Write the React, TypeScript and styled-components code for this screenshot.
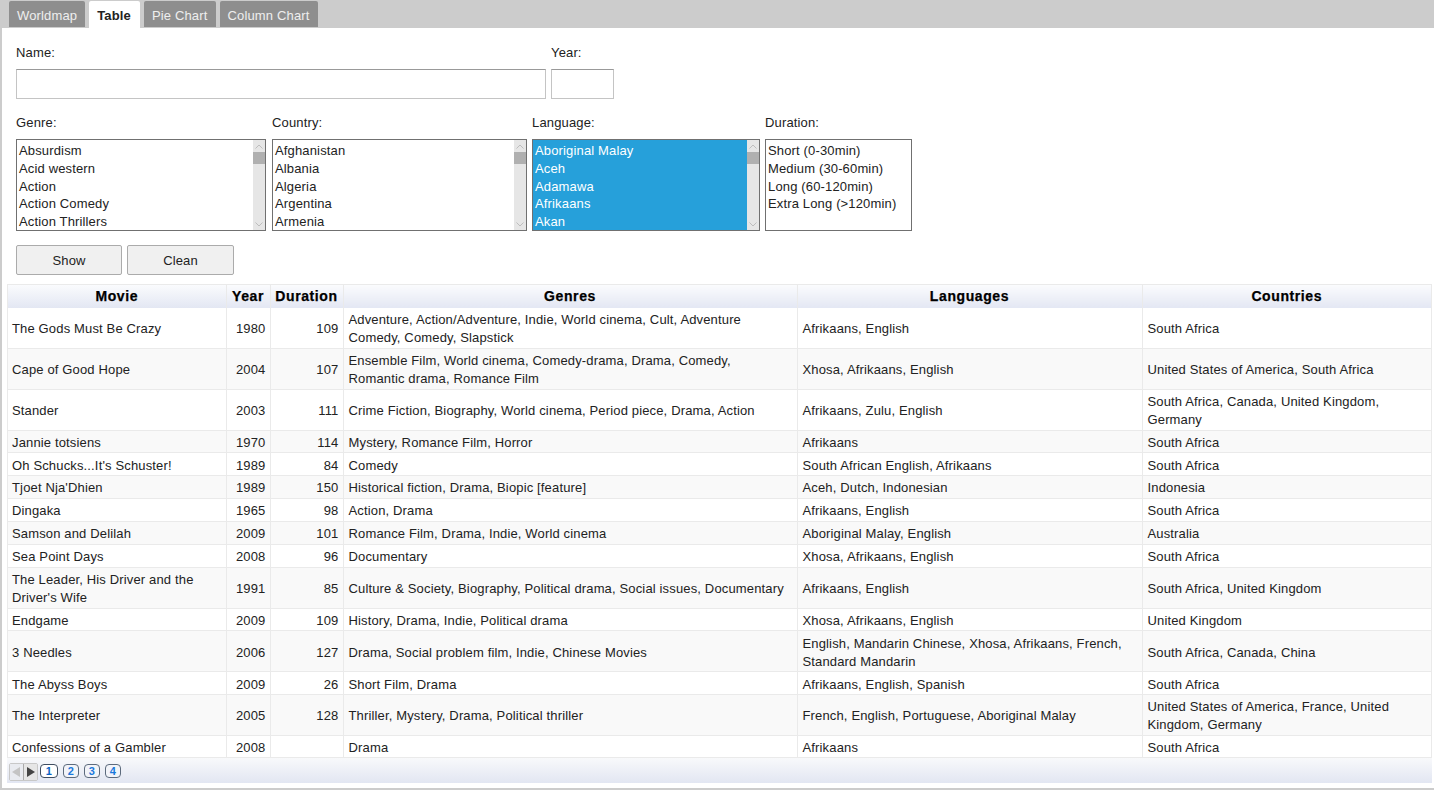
import React from 'react'
import styled, { createGlobalStyle } from 'styled-components'

const GlobalStyle = createGlobalStyle`
  html, body {
    margin: 0;
    padding: 0;
    background: #fff;
    font-family: "Liberation Sans", Arial, sans-serif;
    font-size: 13px;
    color: #222;
  }
`

const tabs = ['Worldmap', 'Table', 'Pie Chart', 'Column Chart']

const genres = ['Absurdism', 'Acid western', 'Action', 'Action Comedy', 'Action Thrillers']
const countries = ['Afghanistan', 'Albania', 'Algeria', 'Argentina', 'Armenia']
const languages = ['Aboriginal Malay', 'Aceh', 'Adamawa', 'Afrikaans', 'Akan']
const durations = ['Short (0-30min)', 'Medium (30-60min)', 'Long (60-120min)', 'Extra Long (>120min)']

const movies = [
  ['The Gods Must Be Crazy', '1980', '109', 'Adventure, Action/Adventure, Indie, World cinema, Cult, Adventure Comedy, Comedy, Slapstick', 'Afrikaans, English', 'South Africa'],
  ['Cape of Good Hope', '2004', '107', 'Ensemble Film, World cinema, Comedy-drama, Drama, Comedy, Romantic drama, Romance Film', 'Xhosa, Afrikaans, English', 'United States of America, South Africa'],
  ['Stander', '2003', '111', 'Crime Fiction, Biography, World cinema, Period piece, Drama, Action', 'Afrikaans, Zulu, English', 'South Africa, Canada, United Kingdom, Germany'],
  ['Jannie totsiens', '1970', '114', 'Mystery, Romance Film, Horror', 'Afrikaans', 'South Africa'],
  ["Oh Schucks...It's Schuster!", '1989', '84', 'Comedy', 'South African English, Afrikaans', 'South Africa'],
  ["Tjoet Nja'Dhien", '1989', '150', 'Historical fiction, Drama, Biopic [feature]', 'Aceh, Dutch, Indonesian', 'Indonesia'],
  ['Dingaka', '1965', '98', 'Action, Drama', 'Afrikaans, English', 'South Africa'],
  ['Samson and Delilah', '2009', '101', 'Romance Film, Drama, Indie, World cinema', 'Aboriginal Malay, English', 'Australia'],
  ['Sea Point Days', '2008', '96', 'Documentary', 'Xhosa, Afrikaans, English', 'South Africa'],
  ["The Leader, His Driver and the Driver's Wife", '1991', '85', 'Culture & Society, Biography, Political drama, Social issues, Documentary', 'Afrikaans, English', 'South Africa, United Kingdom'],
  ['Endgame', '2009', '109', 'History, Drama, Indie, Political drama', 'Xhosa, Afrikaans, English', 'United Kingdom'],
  ['3 Needles', '2006', '127', 'Drama, Social problem film, Indie, Chinese Movies', 'English, Mandarin Chinese, Xhosa, Afrikaans, French, Standard Mandarin', 'South Africa, Canada, China'],
  ['The Abyss Boys', '2009', '26', 'Short Film, Drama', 'Afrikaans, English, Spanish', 'South Africa'],
  ['The Interpreter', '2005', '128', 'Thriller, Mystery, Drama, Political thriller', 'French, English, Portuguese, Aboriginal Malay', 'United States of America, France, United Kingdom, Germany'],
  ['Confessions of a Gambler', '2008', '', 'Drama', 'Afrikaans', 'South Africa'],
]

const Page = styled.div`
  height: 790px;
  box-sizing: border-box;
  border: solid #ccc;
  border-width: 0 0 2px 2px;
  letter-spacing: 0.15px;
  display: flex;
  flex-direction: column;
  overflow: hidden;
`

const TabBar = styled.div`
  height: 28px;
  flex: none;
  background: #ccc;
  margin-left: -2px;
  padding: 1px 0 0 9px;
  box-sizing: border-box;
  display: flex;
  align-items: flex-start;
  gap: 4px;
`

const Tab = styled.div<{ $active?: boolean }>`
  height: ${(p) => (p.$active ? 27 : 26)}px;
  box-sizing: border-box;
  padding: 7px ${(p) => (p.$active ? 9 : 8)}px 0 8px;
  border-radius: 2px 2px 0 0;
  line-height: 15px;
  background: ${(p) => (p.$active ? '#fff' : '#8e8e8e')};
  color: ${(p) => (p.$active ? '#222' : '#eee')};
  font-weight: ${(p) => (p.$active ? 700 : 400)};
`

const Filters = styled.div`
  padding: 0 0 0 14px;
  flex: none;
`

const Row = styled.div`
  display: flex;
  gap: 5px;
`

const Field = styled.div<{ $w: number }>`
  width: ${(p) => p.$w}px;
  flex: none;
`

const Label = styled.div`
  height: 15px;
  line-height: 15px;
  color: #222;
`

const NameLabel = styled(Label)`
  margin: 17px 0 9px;
`

const Input = styled.input`
  display: block;
  box-sizing: border-box;
  width: 100%;
  height: 30px;
  margin: 0;
  border: 1px solid #c4c4c4;
  border-top-color: #999;
  background: #fff;
  outline: none;
`

const SelectRow = styled(Row)`
  margin-top: 16px;
  & > :first-child {
    margin-right: 1px;
  }
`

const SelectLabel = styled(Label)`
  margin-bottom: 9px;
`

const ListBox = styled.div`
  height: 92px;
  box-sizing: border-box;
  border: 1px solid #707070;
  display: flex;
  background: #fff;
`

const Options = styled.div<{ $selected?: boolean }>`
  flex: 1;
  min-width: 0;
  overflow: hidden;
  padding: 2px 0 0 2px;
  line-height: 18px;
  background: ${(p) => (p.$selected ? '#26a0da' : '#fff')};
  color: ${(p) => (p.$selected ? '#fff' : '#222')};
`

const Option = styled.div`
  height: 17.75px;
  white-space: nowrap;
`

const ScrollTrack = styled.div`
  width: 12px;
  flex: none;
  background: #e6e6e6;
  display: flex;
  flex-direction: column;
`

const ScrollButton = styled.div`
  height: 12px;
  flex: none;
  background: #e6e6e6;
  display: flex;
  align-items: center;
  justify-content: center;
`

const ScrollThumb = styled.div`
  height: 12px;
  flex: none;
  background: #b0b0b0;
`

const ScrollRest = styled.div`
  flex: 1;
`

const Chevron = ({ up }: { up?: boolean }) => (
  <svg width="8" height="5" viewBox="0 0 8 5">
    <path d={up ? 'M0.5 4.5L4 1L7.5 4.5' : 'M0.5 0.5L4 4L7.5 0.5'} fill="none" stroke="#bdbdbd" strokeWidth="1" />
  </svg>
)

const Scrollbar = () => (
  <ScrollTrack>
    <ScrollButton><Chevron up /></ScrollButton>
    <ScrollThumb />
    <ScrollRest />
    <ScrollButton><Chevron /></ScrollButton>
  </ScrollTrack>
)

const Buttons = styled.div`
  display: flex;
  gap: 5px;
  margin-top: 14px;
`

const Button = styled.button<{ $w: number }>`
  width: ${(p) => p.$w}px;
  height: 30px;
  box-sizing: border-box;
  margin: 0;
  padding: 0;
  border: 1px solid #ababab;
  border-radius: 2px;
  background: #f0f0f0;
  font: inherit;
  letter-spacing: inherit;
  color: #222;
`

const TableWrap = styled.div`
  margin: 9px 2px 0 5px;
  flex: none;
  border: 1px solid #eaeaea;
  height: 474px;
  overflow: hidden;
  box-sizing: border-box;
`

const Table = styled.table`
  width: 100%;
  table-layout: fixed;
  border-collapse: collapse;
`

const Th = styled.th`
  height: 23px;
  padding: 0;
  font-size: 14px;
  letter-spacing: 0.6px;
  -webkit-text-stroke: 0.25px #000;
  line-height: 15px;
  color: #000;
  text-align: center;
  border-left: 1px solid #eaeaea;
  background: linear-gradient(#fafbfd, #e3e7f3);
  &:first-child {
    border-left: none;
  }
`

const Tr = styled.tr<{ $odd: boolean }>`
  background: ${(p) => (p.$odd ? '#f9f9f9' : '#fff')};
`

const Td = styled.td<{ $num?: boolean }>`
  padding: 3.2px 4px 0.68px 5px;
  line-height: 18px;
  border-left: 1px solid #eaeaea;
  border-bottom: 1px solid #eaeaea;
  text-align: ${(p) => (p.$num ? 'right' : 'left')};
  color: #222;
  vertical-align: middle;
  &:first-child {
    border-left: none;
    padding-left: 4px;
  }
  &:nth-child(4) {
    padding-right: 8px;
  }
`

const Pager = styled.div`
  margin: 0 2px 0 5px;
  height: 25px;
  flex: none;
  box-sizing: border-box;
  padding: 6px 2px 0;
  display: flex;
  background: linear-gradient(#f8f9fb, #e2e6f2);
`

const Arrows = styled.div`
  display: flex;
  height: 18px;
  margin-top: -1px;
  box-sizing: border-box;
  border: 1px solid #c8c8c8;
  border-radius: 2px;
`

const Arrow = styled.div<{ $off?: boolean }>`
  width: 13px;
  display: flex;
  align-items: center;
  justify-content: center;
  background: ${(p) => (p.$off ? '#e9ebf0' : '#e6e6e6')};
  & + & {
    border-left: 1px solid #aaa;
  }
`

const PageButtons = styled.div`
  display: flex;
  gap: 5px;
  margin-left: 2px;
`

const PageButton = styled.div<{ $active?: boolean }>`
  width: ${(p) => (p.$active ? 18 : 16)}px;
  height: 14px;
  line-height: 12px;
  box-sizing: border-box;
  text-align: center;
  font-size: 11px;
  font-weight: 700;
  color: ${(p) => (p.$active ? '#0a62c4' : '#1a78dc')};
  background: ${(p) => (p.$active ? '#fff' : '#f2f4f9')};
  border: 1px solid ${(p) => (p.$active ? '#3f4d60' : '#5c6a7c')};
  border-radius: 4px;
`

const columns = [218, 44, 73, 454, 345, 0]
const headers = ['Movie', 'Year', 'Duration', 'Genres', 'Languages', 'Countries']

const ListField = ({ label, w, items, selected, scroll }: { label: string; w: number; items: string[]; selected?: boolean; scroll?: boolean }) => (
  <Field $w={w}>
    <SelectLabel>{label}</SelectLabel>
    <ListBox>
      <Options $selected={selected}>
        {items.map((item) => <Option key={item}>{item}</Option>)}
      </Options>
      {scroll && <Scrollbar />}
    </ListBox>
  </Field>
)

const App: React.FC = () => (
  <Page>
    <GlobalStyle />
    <TabBar>
      {tabs.map((t) => <Tab key={t} $active={t === 'Table'}>{t}</Tab>)}
    </TabBar>
    <Filters>
      <Row>
        <Field $w={530}>
          <NameLabel>Name:</NameLabel>
          <Input />
        </Field>
        <Field $w={63}>
          <NameLabel>Year:</NameLabel>
          <Input />
        </Field>
      </Row>
      <SelectRow>
        <ListField label="Genre:" w={250} items={genres} scroll />
        <ListField label="Country:" w={255} items={countries} scroll />
        <ListField label="Language:" w={228} items={languages} selected scroll />
        <ListField label="Duration:" w={147} items={durations} />
      </SelectRow>
      <Buttons>
        <Button $w={106}>Show</Button>
        <Button $w={107}>Clean</Button>
      </Buttons>
    </Filters>
    <TableWrap>
      <Table>
        <colgroup>
          {columns.map((c, i) => <col key={i} style={c ? { width: c } : undefined} />)}
        </colgroup>
        <thead>
          <tr>{headers.map((h) => <Th key={h}>{h}</Th>)}</tr>
        </thead>
        <tbody>
          {movies.map((m, i) => (
            <Tr key={m[0]} $odd={i % 2 === 1}>
              {m.map((cell, j) => <Td key={j} $num={j === 1 || j === 2}>{cell}</Td>)}
            </Tr>
          ))}
        </tbody>
      </Table>
    </TableWrap>
    <Pager>
      <Arrows>
        <Arrow $off>
          <svg width="9" height="10" viewBox="0 0 9 10"><path d="M8 0V10L0 5Z" fill="#c4c4c4" /></svg>
        </Arrow>
        <Arrow>
          <svg width="9" height="10" viewBox="0 0 9 10"><path d="M1 0V10L9 5Z" fill="#444" /></svg>
        </Arrow>
      </Arrows>
      <PageButtons>
        <PageButton $active>1</PageButton>
        <PageButton>2</PageButton>
        <PageButton>3</PageButton>
        <PageButton>4</PageButton>
      </PageButtons>
    </Pager>
  </Page>
)

export default App
